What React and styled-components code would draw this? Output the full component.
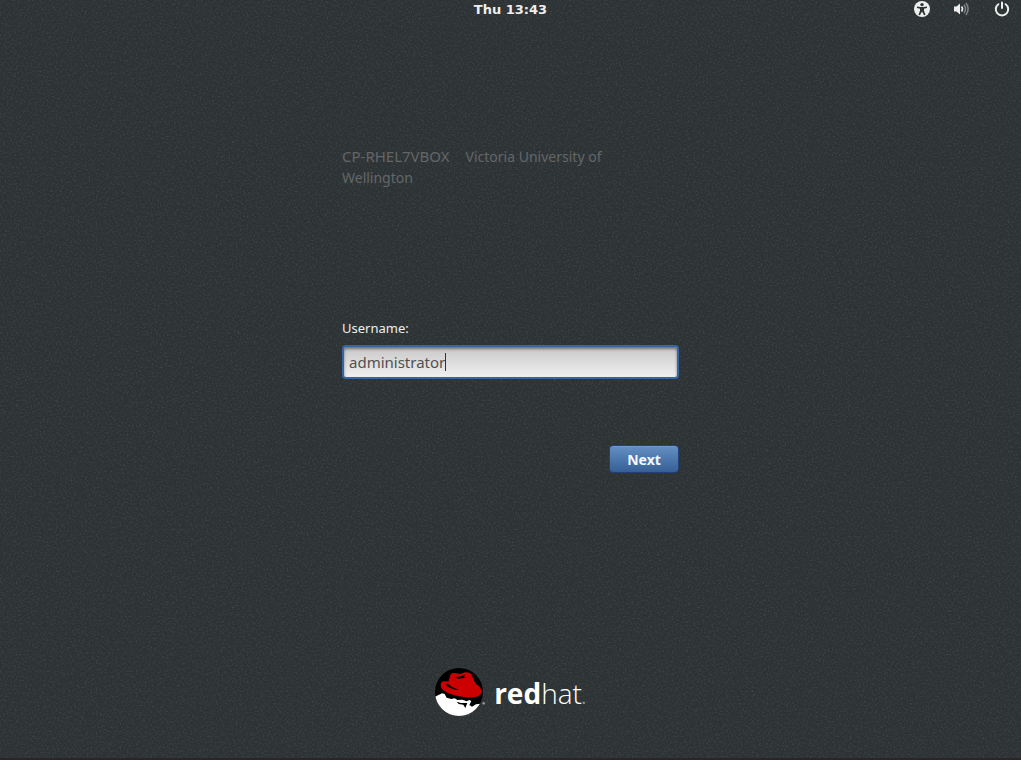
import React, { useLayoutEffect, useRef, useState } from "react";
import styled, { createGlobalStyle } from "styled-components";

const uiFont = `"Noto Sans", "Open Sans", sans-serif`;

const GlobalStyle = createGlobalStyle`
  *, *::before, *::after { box-sizing: border-box; }
  body {
    margin: 0;
    background: #2d3335;
    color: #eeeeec;
    font-family: ${uiFont};
  }
`;

const Screen = styled.div`
  position: relative;
  isolation: isolate;
  display: flex;
  flex-direction: column;
  min-height: 100vh;
  border-bottom: 2px solid #2c2427;
`;

const Texture = styled.svg`
  position: absolute;
  inset: 0;
  z-index: -1;
  width: 100%;
  height: 100%;
`;

const TopBar = styled.header`
  display: grid;
  grid-template-columns: 1fr auto 1fr;
  align-items: center;
  height: 20px;
  padding: 0 11px;
`;

const Clock = styled.time`
  grid-column: 2;
  font-family: "DejaVu Sans", sans-serif;
  font-size: 13px;
  line-height: 20px;
  font-weight: 700;
`;

const StatusArea = styled.nav`
  display: flex;
  justify-content: flex-end;
  gap: 24px;
`;

const StatusButton = styled.button`
  display: flex;
  padding: 0 0 2px;
  border: 0;
  background: none;
  color: #eeeeec;
`;

const Dialog = styled.main`
  flex: 1;
  display: flex;
  flex-direction: column;
  width: 100%;
  max-width: 337px;
  margin: 0 auto;
  padding-top: 126px;
`;

const Banner = styled.p`
  margin: 0;
  min-height: 172px;
  color: #636667;
  font-size: 14px;
  line-height: 21px;
`;

const Host = styled.span`
  margin-right: 16px;
  font-size: 15px;
`;

const LoginForm = styled.form`
  display: flex;
  flex-direction: column;
`;

const FieldLabel = styled.label`
  margin-bottom: 7px;
  font-size: 13px;
  line-height: 20px;
`;

const Field = styled.div`
  position: relative;
  display: flex;
`;

const Entry = styled.input`
  width: 100%;
  height: 34px;
  padding: 0 5px;
  border: 2px solid #3465a4;
  border-radius: 4px;
  outline: none;
  background: linear-gradient(#c8c8c8, #f0f0f0);
  box-shadow: inset 0 2px 3px rgba(0, 0, 0, 0.45);
  color: #505050;
  caret-color: transparent;
  font-family: ${uiFont};
  font-size: 15px;
`;

const Caret = styled.span`
  position: absolute;
  top: 8px;
  width: 1px;
  height: 18px;
  background: #2e3436;
`;

const Actions = styled.div`
  display: flex;
  justify-content: flex-end;
  margin-top: 66px;
`;

const NextButton = styled.button`
  width: 70px;
  height: 28px;
  padding: 0;
  border: 1px solid #1f4379;
  border-radius: 4px;
  background: linear-gradient(#6590c4, #355f95);
  box-shadow: inset 0 1px 0 #719acb;
  color: #f4f7fb;
  font-family: ${uiFont};
  font-size: 14px;
  font-weight: 700;
`;

const Brand = styled.footer`
  display: flex;
  justify-content: center;
  align-items: flex-end;
  gap: 9px;
  padding-bottom: 42px;
`;

const Wordmark = styled.span`
  color: #ffffff;
  font-family: "Open Sans", "Noto Sans", sans-serif;
  font-size: 28px;
  line-height: 34px;
  font-weight: 300;

  b { font-weight: 700; }
  small { color: #8d9192; font-size: 14px; font-weight: 700; }
`;

function AccessIcon() {
  return (
    <svg width="16" height="16" viewBox="0 0 16 16" aria-hidden="true">
      <circle cx="8" cy="8" r="8" fill="currentColor" />
      <circle cx="8" cy="3.6" r="1.7" fill="#2e3436" />
      <path d="M3 5.4 6.5 6h3l3.5-.6v1.5L10 7.7v2l1.5 4-1.4.6L8 10.6l-2.1 3.7-1.4-.6 1.5-4v-2L3 6.9z" fill="#2e3436" />
    </svg>
  );
}

function VolumeIcon() {
  return (
    <svg width="16" height="16" viewBox="0 0 16 16" fill="none" aria-hidden="true">
      <path d="M0 5.500h2.500L6 2.500v11l-3.500-3H0z" fill="currentColor" />
      <path d="M7.500 5.500q2 2.500 0 5" stroke="currentColor" strokeWidth="1.600" />
      <path d="M10 3.800q3 4.200 0 8.400M12 2q4.200 6 0 12" stroke="#7d8182" strokeWidth="1.500" />
    </svg>
  );
}

function PowerIcon() {
  return (
    <svg width="16" height="16" viewBox="0 0 16 16" fill="none" stroke="currentColor" strokeWidth="2" strokeLinecap="round" aria-hidden="true">
      <path d="M4.400 3.200a6.200 6.200 0 1 0 7.200 0M8 1.500v5.500" />
    </svg>
  );
}

function HatLogo() {
  return (
    <svg width="50" height="48" viewBox="13 12 150 144" aria-hidden="true">
      <clipPath id="disc"><circle cx="85" cy="84" r="72" /></clipPath>
      <circle cx="85" cy="84" r="72" />
      <g clipPath="url(#disc)">
        <path d="M10 100 34 88 42 90 48 101 62 105 72 103 80 108 96 107 108 112 116 108 122 111 116 123 124 128 136 121 160 118V160H10z" fill="#fff" />
        <path d="M78 113 91 117 110 117 104 132 98 122 84 120z" />
      </g>
      <path d="M53 53 60 31q4-6 16-3l13 2 13-5q17-1 22 10l11 25q17 9 17 22 0 17-26 18-38 2-73-12-25-12-23-27 2-11 15-9z" fill="#c00" />
      <path d="M73 39 86 38 106 31 98 39 109 41 92 43 82 45zM50 58q13 14 33 18l-3 2q-25-4-34-15z" />
      <circle cx="159" cy="118" r="4" fill="#8d9192" />
    </svg>
  );
}

function UsernameField() {
  const [name, setName] = useState("administrator");
  const [caretX, setCaretX] = useState(7);
  const entry = useRef(null);

  useLayoutEffect(() => {
    const style = getComputedStyle(entry.current);
    const context = document.createElement("canvas").getContext("2d");
    context.font = `${style.fontSize} ${style.fontFamily}`;
    setCaretX(7 + Math.round(context.measureText(name).width));
  }, [name]);

  return (
    <Field>
      <Entry
        ref={entry}
        id="username"
        autoComplete="off"
        spellCheck={false}
        value={name}
        onChange={(event) => setName(event.target.value)}
      />
      <Caret style={{ left: caretX }} />
    </Field>
  );
}

export default function App() {
  return (
    <>
      <GlobalStyle />
      <Screen>
        <Texture aria-hidden="true">
          <filter id="grain" x="0" y="0" width="100%" height="100%">
            <feTurbulence type="fractalNoise" baseFrequency="0.55" numOctaves="2" seed="7" stitchTiles="stitch" />
            <feColorMatrix values="0 0 0 0 0.500  0 0 0 0 0.550  0 0 0 0 0.560  1.200 0 0 0 -0.550" />
          </filter>
          <rect width="100%" height="100%" filter="url(#grain)" opacity="0.250" />
        </Texture>
        <TopBar>
          <Clock>Thu 13:43</Clock>
          <StatusArea aria-label="System status">
            <StatusButton type="button" aria-label="Accessibility"><AccessIcon /></StatusButton>
            <StatusButton type="button" aria-label="Volume"><VolumeIcon /></StatusButton>
            <StatusButton type="button" aria-label="Power"><PowerIcon /></StatusButton>
          </StatusArea>
        </TopBar>
        <Dialog>
          <Banner>
            <Host>CP-RHEL7VBOX</Host>Victoria University of<br />Wellington
          </Banner>
          <LoginForm onSubmit={(event) => event.preventDefault()}>
            <FieldLabel htmlFor="username">Username:</FieldLabel>
            <UsernameField />
            <Actions>
              <NextButton type="submit">Next</NextButton>
            </Actions>
          </LoginForm>
        </Dialog>
        <Brand>
          <HatLogo />
          <Wordmark aria-label="redhat"><b>red</b>hat<small>.</small></Wordmark>
        </Brand>
      </Screen>
    </>
  );
}
